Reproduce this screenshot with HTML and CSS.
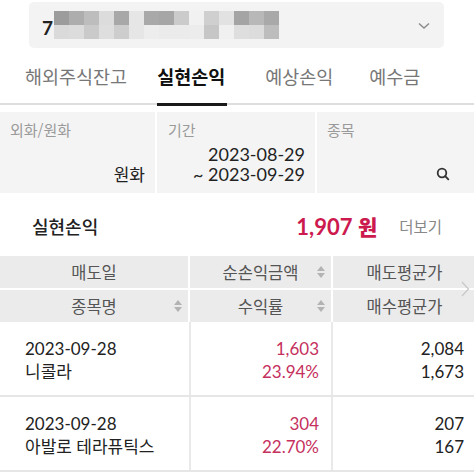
FILE: index.html
```html
<!DOCTYPE html>
<html lang="ko">
<head>
    <meta charset="UTF-8">
    <meta name="viewport" content="width=device-width, initial-scale=1.0">
    <title>실현손익</title>
    <link rel="stylesheet" href="styles.css">
</head>
<body>
    <div class="account">
        <span class="account-no">7</span>
        <div class="mosaic">
            <i style="background:#9c9c9c"></i><i style="background:#adadad"></i><i style="background:#bdbdbd"></i><i style="background:#dcdcdc"></i><i style="background:#a8a8a8"></i><i style="background:#e6e6e6"></i><i style="background:#a9a9a9"></i><i style="background:#a6a6a6"></i><i style="background:#cbcbcb"></i><i style="background:#f1f1f1"></i><i style="background:#cfcfcf"></i><i style="background:#e2e2e2"></i><i style="background:#a4a4a4"></i><i style="background:#b8b8b8"></i><i style="background:#a9a9a9"></i>
            <i style="background:#dadada"></i><i style="background:#dcdcdc"></i><i style="background:#cacaca"></i><i style="background:#dedede"></i><i style="background:#cdcdcd"></i><i style="background:#e6e6e6"></i><i style="background:#ededed"></i><i style="background:#ebebeb"></i><i style="background:#ebebeb"></i><i style="background:#ececec"></i><i style="background:#c6c6c6"></i><i style="background:#f0f0f0"></i><i style="background:#dedede"></i><i style="background:#dcdcdc"></i><i style="background:#bdbdbd"></i>
        </div>
        <svg class="chevron" width="12" height="8" viewBox="0 0 12 8"><path d="M1 1.5 L6 6 L11 1.5" fill="none" stroke="#8a8a8a" stroke-width="1.4"/></svg>
    </div>

    <nav class="tabs">
        <span class="tab">해외주식잔고</span>
        <span class="tab active">실현손익</span>
        <span class="tab">예상손익</span>
        <span class="tab">예수금</span>
    </nav>

    <div class="filters">
        <div class="filter">
            <span class="filter-label">외화/원화</span>
            <span class="filter-value">원화</span>
        </div>
        <div class="filter">
            <span class="filter-label">기간</span>
            <span class="filter-value num">2023-08-29<br>~ 2023-09-29</span>
        </div>
        <div class="filter">
            <span class="filter-label">종목</span>
            <svg class="search" width="14" height="14" viewBox="0 0 14 14"><circle cx="6" cy="6" r="4.3" fill="none" stroke="#333" stroke-width="1.8"/><path d="M9.2 9.2 L12.3 12.3" stroke="#333" stroke-width="1.9" stroke-linecap="round"/></svg>
        </div>
    </div>

    <div class="summary">
        <span class="summary-title">실현손익</span>
        <span class="summary-amount num">1,907 <b>원</b></span>
        <span class="summary-more">더보기</span>
    </div>

    <div class="table">
        <div class="thead">
            <div class="th">매도일</div>
            <div class="th sortable">순손익금액<span class="sort"></span></div>
            <div class="th">매도평균가</div>
            <div class="th sortable">종목명<span class="sort"></span></div>
            <div class="th sortable">수익률<span class="sort"></span></div>
            <div class="th">매수평균가</div>
        </div>
        <div class="row">
            <div class="td left">2023-09-28<br>니콜라</div>
            <div class="td red">1,603<br>23.94%</div>
            <div class="td">2,084<br>1,673</div>
        </div>
        <div class="row">
            <div class="td left">2023-09-28<br>아발로 테라퓨틱스</div>
            <div class="td red">304<br>22.70%</div>
            <div class="td">207<br>167</div>
        </div>
        <svg class="more-cols" width="9" height="16" viewBox="0 0 9 16"><path d="M1 1 L7.5 8 L1 15" fill="none" stroke="#c8c8c8" stroke-width="1.3"/></svg>
    </div>
</body>
</html>
```

FILE: styles.css
```css
* {
    margin: 0;
    padding: 0;
    box-sizing: border-box;
}

body {
    width: 474px;
    background: #fff;
    color: #222;
    font-family: "Lato", "Noto Sans CJK KR", sans-serif;
    overflow: hidden;
}

.num {
    font-family: "Lato", sans-serif;
}

/* 계좌 선택 */
.account {
    margin: 2px 30px 0 29px;
    height: 46px;
    background: #f3f3f3;
    border-radius: 5px;
    display: flex;
    align-items: center;
    padding: 0 14px 0 13px;
}

.account-no {
    font-size: 19px;
    font-weight: 700;
    color: #222;
    margin-top: 4px;
}

.mosaic {
    display: grid;
    grid-template-columns: repeat(15, 15px);
    grid-template-rows: 14px 14px;
    margin-left: 1px;
}

.mosaic i {
    display: block;
}

.chevron {
    margin-left: auto;
    margin-top: 2px;
}

/* 탭 */
.tabs {
    display: flex;
    height: 57px;
    padding: 0 0 0 25px;
    align-items: center;
    border-bottom: 2px solid #dedede;
}

.tab {
    font-family: "Noto Sans CJK KR", sans-serif;
    font-size: 18.5px;
    color: #777;
    position: relative;
    margin-right: 30px;
    margin-top: 1px;
}

.tab:nth-child(2) {
    margin-right: 40px;
}

.tab:nth-child(3) {
    margin-right: 36px;
}

.tab.active {
    color: #111;
    font-weight: 700;
}

.tab.active::after {
    content: "";
    position: absolute;
    left: 0;
    right: -2px;
    bottom: -17px;
    height: 3px;
    background: #1a1a1a;
}

/* 조회 조건 */
.filters {
    margin-top: 7px;
    display: grid;
    grid-template-columns: 155px 158px 157px;
    gap: 2px;
    height: 81px;
}

.filter {
    background: #f4f4f4;
    display: flex;
    flex-direction: column;
    padding: 8px 10px 9px 10px;
}

.filter:nth-child(2) {
    padding-left: 11px;
}

.filter-label {
    font-family: "Noto Sans CJK KR", sans-serif;
    font-size: 15px;
    color: #9a9a9a;
    line-height: 20px;
}

.filter-value {
    margin-top: auto;
    text-align: right;
    font-size: 18px;
    line-height: 20px;
    color: #222;
}

.filter:first-child .filter-value {
    font-family: "Noto Sans CJK KR", sans-serif;
    font-size: 17px;
}

.search {
    margin-top: auto;
    margin-bottom: 3px;
    align-self: flex-end;
    margin-right: 14px;
}

/* 합계 */
.summary {
    height: 63px;
    display: flex;
    align-items: center;
    padding: 2px 32px 0;
}

.summary-title {
    font-family: "Noto Sans CJK KR", sans-serif;
    font-size: 18px;
    font-weight: 500;
    color: #222;
}

.summary-amount {
    margin-left: auto;
    font-size: 22px;
    font-weight: 700;
    color: #cc1a4e;
}

.summary-amount b {
    font-family: "Noto Sans CJK KR", sans-serif;
    font-size: 21px;
}

.summary-more {
    margin-left: 22px;
    font-family: "Noto Sans CJK KR", sans-serif;
    font-size: 15.5px;
    color: #888;
}

/* 표 */
.table {
    position: relative;
}

.thead {
    display: grid;
    grid-template-columns: 188px 141px 143px;
    grid-auto-rows: 32px;
    gap: 2px;
    background: #fff;
}

.th {
    background: #ebebeb;
    display: flex;
    align-items: center;
    justify-content: center;
    font-family: "Noto Sans CJK KR", sans-serif;
    font-size: 16.5px;
    color: #555;
    position: relative;
}

.sort {
    position: absolute;
    right: 6px;
    top: 10px;
    width: 8px;
    height: 12px;
}

.sort::before,
.sort::after {
    content: "";
    position: absolute;
    left: 0;
    border-left: 4px solid transparent;
    border-right: 4px solid transparent;
}

.sort::before {
    top: 0;
    border-bottom: 5px solid #b3b3b3;
}

.sort::after {
    bottom: 0;
    border-top: 5px solid #b3b3b3;
}

.row {
    display: grid;
    grid-template-columns: 189px 142px 143px;
    height: 75px;
    border-bottom: 2px solid #e6e6e6;
}

.td {
    padding: 15px 10px 0 0;
    font-size: 17px;
    line-height: 23px;
    text-align: right;
    color: #222;
    border-left: 2px solid #e9e9e9;
}

.td.left {
    border-left: none;
    text-align: left;
    padding-left: 25px;
}

.td.red {
    color: #c5305d;
    padding-right: 12px;
}

.more-cols {
    position: absolute;
    right: 4px;
    top: 25px;
}
```
